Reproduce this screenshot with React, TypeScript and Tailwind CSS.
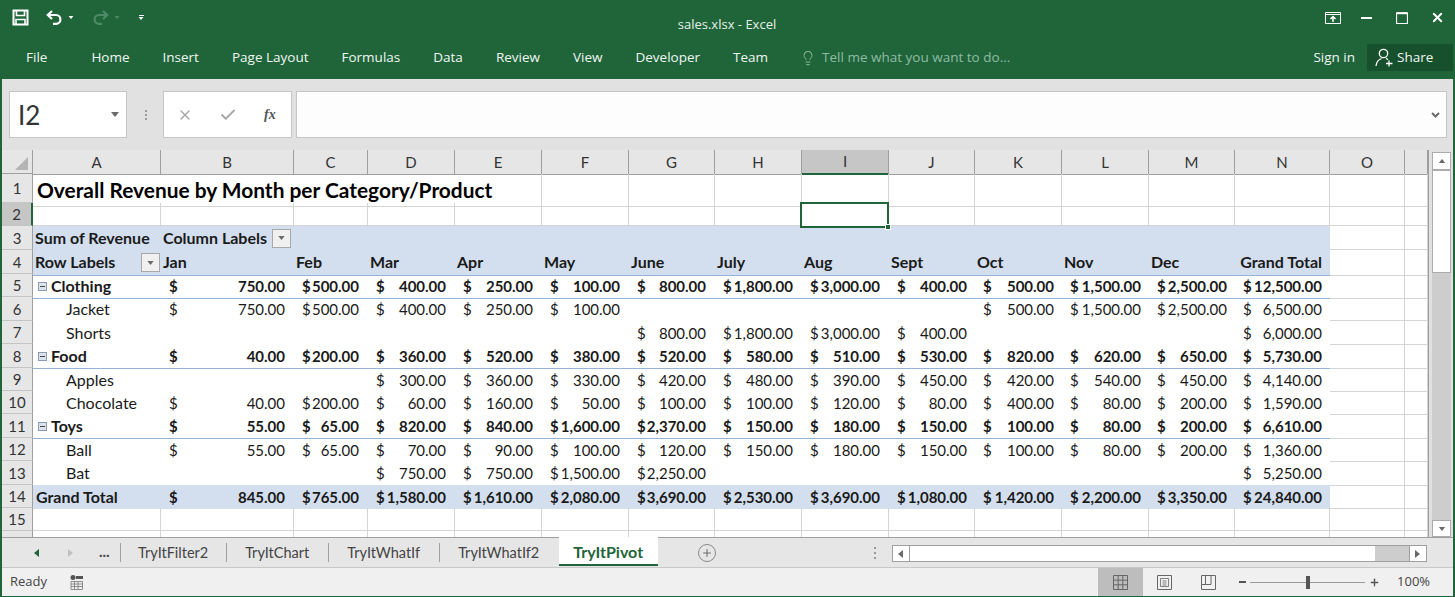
import { Check, Lightbulb, Plus, X } from "lucide-react";

// ── Sheet data ──────────────────────────────────────────────────
const GRID_COLS =
  "grid grid-cols-[128px_133px_74px_87px_87px_87px_86px_87px_87px_86px_87px_87px_86px_95px_75px_23px]";
const PIVOT_COLS =
  "grid grid-cols-[128px_133px_74px_87px_87px_87px_86px_87px_87px_86px_87px_87px_86px_95px]";

const COLUMNS = ["A", "B", "C", "D", "E", "F", "G", "H", "I", "J", "K", "L", "M", "N", "O", ""];
const MONTHS = ["Jan", "Feb", "Mar", "Apr", "May", "June", "July", "Aug", "Sept", "Oct", "Nov", "Dec"];

type Row = {
  n: number;
  h: string;
  label: string;
  kind: "group" | "item" | "total";
  values: string[];
};

const ROWS: Row[] = [
  { n: 5, h: "h-[23px]", label: "Clothing", kind: "group", values: ["750.00", "500.00", "400.00", "250.00", "100.00", "800.00", "1,800.00", "3,000.00", "400.00", "500.00", "1,500.00", "2,500.00", "12,500.00"] },
  { n: 6, h: "h-[24px]", label: "Jacket", kind: "item", values: ["750.00", "500.00", "400.00", "250.00", "100.00", "", "", "", "", "500.00", "1,500.00", "2,500.00", "6,500.00"] },
  { n: 7, h: "h-[23px]", label: "Shorts", kind: "item", values: ["", "", "", "", "", "800.00", "1,800.00", "3,000.00", "400.00", "", "", "", "6,000.00"] },
  { n: 8, h: "h-[24px]", label: "Food", kind: "group", values: ["40.00", "200.00", "360.00", "520.00", "380.00", "520.00", "580.00", "510.00", "530.00", "820.00", "620.00", "650.00", "5,730.00"] },
  { n: 9, h: "h-[23px]", label: "Apples", kind: "item", values: ["", "", "300.00", "360.00", "330.00", "420.00", "480.00", "390.00", "450.00", "420.00", "540.00", "450.00", "4,140.00"] },
  { n: 10, h: "h-[23px]", label: "Chocolate", kind: "item", values: ["40.00", "200.00", "60.00", "160.00", "50.00", "100.00", "100.00", "120.00", "80.00", "400.00", "80.00", "200.00", "1,590.00"] },
  { n: 11, h: "h-[24px]", label: "Toys", kind: "group", values: ["55.00", "65.00", "820.00", "840.00", "1,600.00", "2,370.00", "150.00", "180.00", "150.00", "100.00", "80.00", "200.00", "6,610.00"] },
  { n: 12, h: "h-[23px]", label: "Ball", kind: "item", values: ["55.00", "65.00", "70.00", "90.00", "100.00", "120.00", "150.00", "180.00", "150.00", "100.00", "80.00", "200.00", "1,360.00"] },
  { n: 13, h: "h-[24px]", label: "Bat", kind: "item", values: ["", "", "750.00", "750.00", "1,500.00", "2,250.00", "", "", "", "", "", "", "5,250.00"] },
  { n: 14, h: "h-[23px]", label: "Grand Total", kind: "total", values: ["845.00", "765.00", "1,580.00", "1,610.00", "2,080.00", "3,690.00", "2,530.00", "3,690.00", "1,080.00", "1,420.00", "2,200.00", "3,350.00", "24,840.00"] },
];

const LATO = "font-['Lato','Liberation_Sans',sans-serif]";
const CELL_FONT = `${LATO} text-[15px] text-[#1a1a1a]`;
const LABEL_FONT = `${LATO} text-[16px] text-[#1a1a1a]`;
const UI_FONT = "font-['Open_Sans','Liberation_Sans',sans-serif]";

// ── Small drawings ──────────────────────────────────────────────
function Caret({ className }: { className: string }) {
  return (
    <svg width="8" height="5" viewBox="0 0 8 5" className={className} fill="currentColor">
      <path d="M0 0h8L4 5z" />
    </svg>
  );
}

function SaveIcon() {
  return (
    <svg width="17" height="17" viewBox="0 0 17 17" fill="none" stroke="#fff" strokeWidth="2">
      <path d="M1.500 1.500h14v14h-14z" />
      <path d="M4.500 1.500v5h8v-5M4 15.500v-5h9v5" strokeWidth="1.600" />
    </svg>
  );
}

function UndoIcon({ color }: { color: string }) {
  return (
    <svg width="17" height="15" viewBox="0 0 17 15" fill="none" stroke={color} strokeWidth="2.200">
      <path d="M6 1 1.800 5 6 9" />
      <path d="M2 5h8a4.400 4.400 0 0 1 0 8.800H7" />
    </svg>
  );
}

function RedoIcon({ color }: { color: string }) {
  return (
    <svg width="17" height="15" viewBox="0 0 17 15" fill="none" stroke={color} strokeWidth="2.200">
      <path d="M11 1l4.200 4L11 9" />
      <path d="M15 5H7a4.400 4.400 0 0 0 0 8.800h3" />
    </svg>
  );
}

function WindowControls() {
  return (
    <div className="flex items-center text-white">
      <svg width="16" height="12" viewBox="0 0 16 12" fill="none" stroke="#fff" className="mr-[20px]">
        <path d="M.5.500h15v11H.500z" />
        <path d="M.5 2.500h15" />
        <path d="M8 10V5M5.500 7 8 4.500 10.500 7" strokeWidth="1.500" />
      </svg>
      <div className="mr-[24px] h-[2px] w-[11px] bg-white" />
      <svg width="12" height="12" viewBox="0 0 12 12" fill="none" stroke="#fff" className="mr-[22px]">
        <path d="M.5 1h11v10.500H.500z" strokeWidth="1.200" />
        <path d="M.5 1.200h11" strokeWidth="2" />
      </svg>
      <X size={15} strokeWidth={3} />
    </div>
  );
}

function ShareIcon() {
  return (
    <svg width="19" height="19" viewBox="0 0 19 19" fill="none" stroke="#fff" strokeWidth="1.300">
      <circle cx="8.500" cy="5.500" r="4.200" />
      <path d="M1 18c.4-4 2.500-6.500 5.500-7.500M11 10.500c.8.300 1.500.7 2 1.200" />
      <path d="M14 12.500v6M11 15.500h6.500" />
    </svg>
  );
}

function FilterButton({ className }: { className: string }) {
  return (
    <div className={`flex h-[19px] w-[19px] shrink-0 items-center justify-center border border-[#a8a8a8] bg-[#f0f0f0] text-[#6a6a6a] ${className}`}>
      <Caret className="h-[4px] w-[7px]" />
    </div>
  );
}

function CollapseBox() {
  return (
    <div className="mr-[4px] flex h-[9px] w-[9px] items-center justify-center border border-[#8c9bb0] bg-[#dde3ec]">
      <div className="h-[1px] w-[5px] bg-[#444]" />
    </div>
  );
}

// ── Title bar and ribbon tabs ───────────────────────────────────
function TitleBar() {
  return (
    <div className={`h-[79px] shrink-0 bg-[#1f6539] ${UI_FONT}`}>
      <div className="flex h-[40px] items-center pl-[10px] pr-[7px] pt-[1px]">
        <div className="flex -translate-y-[3px] items-center">
          <SaveIcon />
          <div className="ml-[17px]"><UndoIcon color="#ffffff" /></div>
          <Caret className="ml-[5px] h-[3px] w-[6px] text-white" />
          <div className="ml-[18px]"><RedoIcon color="#4f8a68" /></div>
          <Caret className="ml-[5px] h-[3px] w-[6px] text-[#4f8a68]" />
          <div className="ml-[18px] flex flex-col items-center gap-[1px]">
            <div className="h-[1px] w-[5px] bg-white" />
            <Caret className="h-[3px] w-[6px] text-white" />
          </div>
        </div>
        <div className="ml-[463px] w-[240px] translate-y-[4px] text-center text-[13px] text-[#e6efe9]">sales.xlsx - Excel</div>
        <div className="ml-auto -translate-y-[3px] pr-[1px]">
          <WindowControls />
        </div>
      </div>
      <div className="flex h-[39px] -translate-y-[2px] items-center text-[13.500px] text-[#f1f6f3]">
        <span className="ml-[24px] mr-[44px]">File</span>
        <div className="flex items-center gap-[33px]">
          {["Home", "Insert", "Page Layout", "Formulas", "Data", "Review", "View", "Developer", "Team"].map((t) => (
            <span key={t}>{t}</span>
          ))}
        </div>
        <Lightbulb size={16} strokeWidth={1.500} className="ml-[32px] text-[#8fbba3]" />
        <span className="ml-[6px] text-[#8fbba3]">Tell me what you want to do...</span>
        <span className="ml-auto mr-[12px]">Sign in</span>
        <div className="flex h-[27px] w-[86px] items-center gap-[3px] bg-[#17502c] pl-[8px]">
          <ShareIcon />
          <span>Share</span>
        </div>
      </div>
    </div>
  );
}

// ── Name box and formula bar ────────────────────────────────────
function FormulaBar() {
  return (
    <div className="flex h-[71px] shrink-0 items-start bg-[#e1e1e1] pl-[7px] pr-[6px] pt-[12px]">
      <div className="flex h-[47px] w-[118px] items-center border border-[#c6c6c6] bg-white pl-[8px] pr-[7px]">
        <span className={`text-[26px] leading-none text-[#333] ${LATO}`}>I2</span>
        <Caret className="ml-auto text-[#6a6a6a]" />
      </div>
      <div className="ml-[18px] flex h-[47px] flex-col justify-center gap-[2px] pt-[1px]">
        <div className="h-[2px] w-[2px] bg-[#9a9a9a]" />
        <div className="h-[2px] w-[2px] bg-[#9a9a9a]" />
        <div className="h-[2px] w-[2px] bg-[#9a9a9a]" />
      </div>
      <div className="ml-[16px] flex h-[47px] w-[129px] items-center border border-[#c6c6c6] bg-white pl-[13px]">
        <X size={16} strokeWidth={2} className="text-[#a8a8a8]" />
        <Check size={18} strokeWidth={2.500} className="ml-[26px] text-[#a8a8a8]" />
        <span className="ml-[27px] font-['Liberation_Serif',serif] text-[14px] font-bold italic text-[#555]">fx</span>
      </div>
      <div className="ml-[4px] flex h-[47px] flex-1 items-center justify-end border border-[#c6c6c6] bg-[#fdfdfd] pr-[6px]">
        <svg width="9" height="6" viewBox="0 0 9 6" fill="none" stroke="#6a6a6a" strokeWidth="2">
          <path d="M1 1l3.500 3.500L8 1" />
        </svg>
      </div>
    </div>
  );
}

// ── Cells ───────────────────────────────────────────────────────
function Money({ value, bold, late }: { value: string; bold: boolean; late: boolean }) {
  if (!value) return <div />;
  return (
    <div className={`flex items-center justify-between pl-[8px] ${late ? "pr-[8px]" : "pr-[9px]"} ${bold ? "font-bold" : ""} ${CELL_FONT}`}>
      <span>$</span>
      <span>{value}</span>
    </div>
  );
}

function RowHead({ n, active }: { n: number | string; active?: boolean }) {
  return (
    <div className={`flex w-[31px] shrink-0 items-center justify-center border-b border-r border-b-[#c4c4c4] pt-[1px] text-[15px] text-[#333] ${active ? "border-r-2 border-r-[#1f6539] bg-[#c6c6c6] text-[#1f6539]" : "border-r-[#9f9f9f] bg-[#e6e6e6]"} ${LATO}`}>
      {n}
    </div>
  );
}

const LINE = "border-b border-r border-[#d4d4d4]";

function BlankCells({ count }: { count: number }) {
  return (
    <>
      {Array.from({ length: count }).map((_, i) => (
        <div key={i} className={LINE} />
      ))}
    </>
  );
}

// ── Worksheet ───────────────────────────────────────────────────
function Sheet() {
  return (
    <div className="flex min-h-0 flex-1 flex-col">
      {/* column headers */}
      <div className="flex h-[24px] shrink-0 bg-[#e6e6e6]">
        <div className="relative w-[31px] shrink-0 border-b border-r border-[#9f9f9f]">
          <div className="absolute bottom-[3px] right-[4px] h-0 w-0 border-b-[13px] border-l-[13px] border-b-[#b4b4b4] border-l-transparent" />
        </div>
        <div className={`${GRID_COLS} flex-1`}>
          {COLUMNS.map((c, i) => (
            <div
              key={i}
              className={`flex items-center justify-center text-[15px] text-[#333] ${LATO} ${
                c === "I"
                  ? "border-b-2 border-r border-b-[#1f6539] border-r-[#9f9f9f] bg-[#c6c6c6] text-[#1f6539]"
                  : "border-b border-r border-[#9f9f9f]"
              }`}
            >
              {c}
            </div>
          ))}
        </div>
      </div>

      {/* row 1 */}
      <div className="flex h-[29px] shrink-0">
        <RowHead n={1} />
        <div className={`${GRID_COLS} flex-1`}>
          <div className={`col-span-5 flex items-center pb-[1px] pl-[4px] ${LATO} text-[20.900px] font-bold text-black ${LINE}`}>
            Overall Revenue by Month per Category/Product
          </div>
          <BlankCells count={11} />
        </div>
      </div>

      {/* row 2 */}
      <div className="flex h-[23px] shrink-0">
        <RowHead n={2} active />
        <div className={`${GRID_COLS} flex-1`}>
          {COLUMNS.map((c, i) =>
            c === "I" ? (
              <div key={i} className="relative z-10 -mb-[2px] -ml-[2px] -mt-[1px] border-2 border-[#1f6539] bg-white">
                <div className="absolute -bottom-[4px] -right-[4px] h-[6px] w-[6px] border border-white bg-[#1f6539]" />
              </div>
            ) : (
              <div key={i} className={LINE} />
            ),
          )}
        </div>
      </div>

      {/* row 3, pivot header */}
      <div className="flex h-[24px] shrink-0">
        <RowHead n={3} />
        <div className={`${GRID_COLS} flex-1`}>
          <div className="col-span-14 flex items-center bg-[#d3dfee]">
            <span className={`w-[128px] pl-[2px] font-bold ${LABEL_FONT}`}>Sum of Revenue</span>
            <span className={`pl-[2px] font-bold ${LABEL_FONT}`}>Column Labels</span>
            <FilterButton className="ml-[5px]" />
          </div>
          <BlankCells count={2} />
        </div>
      </div>

      {/* row 4, month captions */}
      <div className="flex h-[24px] shrink-0">
        <RowHead n={4} />
        <div className={`${GRID_COLS} flex-1`}>
          <div className={`col-span-14 ${PIVOT_COLS} border-b border-[#95b3d7] bg-[#d3dfee]`}>
            <div className={`flex items-center justify-between pl-[2px] pr-[1px] font-bold ${LABEL_FONT}`}>
              <span className="pb-[1px]">Row Labels</span>
              <FilterButton className="" />
            </div>
            {MONTHS.map((m) => (
              <div key={m} className={`flex items-center pb-[1px] pl-[2px] font-bold ${LABEL_FONT}`}>{m}</div>
            ))}
            <div className={`flex items-center justify-end pb-[1px] pr-[8px] font-bold ${LABEL_FONT}`}>Grand Total</div>
          </div>
          <BlankCells count={2} />
        </div>
      </div>

      {/* rows 5 to 14, pivot body */}
      {ROWS.map((row) => {
        const bold = row.kind !== "item";
        const edge =
          row.kind === "group" || row.n === 13
            ? "border-b border-[#95b3d7]"
            : row.kind === "total"
              ? "bg-[#d3dfee]"
              : "";
        return (
          <div key={row.n} className={`flex shrink-0 ${row.h}`}>
            <RowHead n={row.n} />
            <div className={`${GRID_COLS} flex-1`}>
              <div className={`col-span-14 ${PIVOT_COLS} ${edge}`}>
                <div
                  className={`flex items-center ${LABEL_FONT} ${bold ? "font-bold" : ""} ${
                    row.kind === "group" ? "pl-[5px]" : row.kind === "item" ? "pl-[33px]" : "pl-[3px]"
                  }`}
                >
                  {row.kind === "group" && <CollapseBox />}
                  {row.label}
                </div>
                {row.values.map((v, i) => (
                  <Money key={i} value={v} bold={bold} late={i >= 8} />
                ))}
              </div>
              <BlankCells count={2} />
            </div>
          </div>
        );
      })}

      {/* row 15 and the cut off row 16 */}
      <div className="flex h-[23px] shrink-0">
        <RowHead n={15} />
        <div className={`${GRID_COLS} flex-1`}>
          <BlankCells count={16} />
        </div>
      </div>
      <div className="flex h-[6px] shrink-0 overflow-hidden">
        <div className="w-[31px] shrink-0 border-r border-[#9f9f9f] bg-[#e6e6e6]" />
        <div className={`${GRID_COLS} flex-1`}>
          {COLUMNS.map((c, i) => (
            <div key={i} className="border-r border-[#d4d4d4]" />
          ))}
        </div>
      </div>
    </div>
  );
}

function VerticalScrollbar() {
  return (
    <div className="flex w-[25px] shrink-0 flex-col border-l border-[#9f9f9f] bg-[#e1e1e1] pl-[3px] pt-[2px]">
      <div className="flex h-[18px] w-[19px] items-center justify-center border border-[#ababab] bg-white text-[#6a6a6a]">
        <Caret className="h-[4px] w-[8px] rotate-180" />
      </div>
      <div className="flex w-[19px] flex-1 flex-col bg-[#cdcdcd]">
        <div className="h-[103px] border border-[#ababab] bg-white" />
        <div className="flex-1" />
      </div>
      <div className="flex h-[17px] w-[19px] items-center justify-center border border-[#ababab] bg-white text-[#6a6a6a]">
        <Caret className="h-[4px] w-[8px]" />
      </div>
    </div>
  );
}

// ── Sheet tabs and horizontal scrollbar ─────────────────────────
function Triangle({ dir, color }: { dir: "left" | "right"; color: string }) {
  return (
    <svg width="5" height="8" viewBox="0 0 5 8" fill={color}>
      <path d={dir === "left" ? "M5 0v8L0 4z" : "M0 0v8l5-4z"} />
    </svg>
  );
}

function TabsBar() {
  const tabs = ["TryItFilter2", "TryItChart", "TryItWhatIf", "TryItWhatIf2"];
  return (
    <div className={`flex h-[30px] shrink-0 items-start border-t border-[#9f9f9f] bg-[#e6e6e6] ${LATO}`}>
      <div className="ml-[32px] mt-[11px]"><Triangle dir="left" color="#1f6539" /></div>
      <div className="ml-[29px] mt-[11px]"><Triangle dir="right" color="#c0c0c0" /></div>
      <span className="ml-[26px] mt-[2px] text-[15px] font-bold text-[#444]">...</span>
      <div className="ml-[10px] mt-[4px] flex h-[20px] items-center pt-[1px] text-[14.500px] text-[#444]">
        <div className="h-full w-px bg-[#a0a0a0]" />
        <span className="w-[105px] text-center">{tabs[0]}</span>
        <div className="h-full w-px bg-[#a0a0a0]" />
        <span className="w-[101px] text-center">{tabs[1]}</span>
        <div className="h-full w-px bg-[#a0a0a0]" />
        <span className="w-[110px] text-center">{tabs[2]}</span>
        <div className="h-full w-px bg-[#a0a0a0]" />
        <span className="w-[118px] text-center">{tabs[3]}</span>
      </div>
      <div className="-mt-[1px] ml-[1px] flex h-[29px] w-[99px] items-center justify-center border-b-2 border-b-[#1f6539] bg-white pt-[2px] text-[16px] font-bold text-[#1f6539]">
        TryItPivot
      </div>
      <div className="ml-[40px] mt-[6px] flex h-[18px] w-[18px] items-center justify-center rounded-full border border-[#8a8a8a] text-[#6a6a6a]">
        <Plus size={12} strokeWidth={2} />
      </div>
      <div className="ml-[158px] mt-[9px] flex flex-col gap-[3px]">
        <div className="h-[2px] w-[2px] bg-[#9a9a9a]" />
        <div className="h-[2px] w-[2px] bg-[#9a9a9a]" />
        <div className="h-[2px] w-[2px] bg-[#9a9a9a]" />
      </div>
      <div className="ml-[16px] mt-[7px] flex h-[17px] w-[535px] border border-[#9f9f9f] bg-[#cdcdcd]">
        <div className="flex w-[17px] items-center justify-center border-r border-[#9f9f9f] bg-white">
          <Triangle dir="left" color="#6a6a6a" />
        </div>
        <div className="w-[465px] bg-white" />
        <div className="flex-1" />
        <div className="flex w-[17px] items-center justify-center border-l border-[#9f9f9f] bg-white">
          <Triangle dir="right" color="#6a6a6a" />
        </div>
      </div>
    </div>
  );
}

// ── Status bar ──────────────────────────────────────────────────
function StatusBar() {
  return (
    <div className={`flex h-[29px] shrink-0 items-center border-t border-[#c8c8c8] bg-[#f0f0f0] text-[13px] text-[#444] ${UI_FONT}`}>
      <span className="ml-[8px] text-[13px]">Ready</span>
      <svg width="13" height="15" viewBox="0 0 13 15" fill="none" className="ml-[23px]">
        <circle cx="3" cy="2.500" r="2.500" fill="#555" />
        <path d="M6 1h7v3H6z" fill="#555" />
        <path d="M1 6.500h11.500v8H1zM1 9h11.500M1 11.500h11.500M4.500 6.500v8M8 6.500v8" stroke="#777" strokeWidth=".8" />
      </svg>
      <div className="ml-[1015px] flex h-full w-[45px] items-center justify-center bg-[#bdbdbd]">
        <svg width="15" height="15" viewBox="0 0 15 15" fill="none" stroke="#666">
          <path d="M.5.500h14v14H.500zM.5 5.200h14M.5 9.800h14M5.200.500v14M9.800.500v14" />
        </svg>
      </div>
      <svg width="15" height="15" viewBox="0 0 15 15" fill="none" stroke="#666" className="ml-[14px]">
        <path d="M.5.500h14v14H.500z" />
        <path d="M3.500 3.500h8v8h-8zM5.500 6h4M5.500 8h4M5.500 10h4" strokeWidth=".8" />
      </svg>
      <svg width="15" height="15" viewBox="0 0 15 15" fill="none" stroke="#666" className="ml-[29px]">
        <path d="M.5.500h14v14H.500zM.5 9.500h9.500V.500M4.500.500v9" />
      </svg>
      <div className="ml-[23px] h-[2px] w-[7px] bg-[#555]" />
      <div className="relative ml-[4px] h-px w-[115px] bg-[#9a9a9a]">
        <div className="absolute -top-[6px] left-[56px] h-[13px] w-[4px] bg-[#555]" />
      </div>
      <Plus size={11} strokeWidth={3} className="ml-[4px] text-[#555]" />
      <span className="ml-[17px] text-[13px]">100%</span>
    </div>
  );
}

// ── Page ────────────────────────────────────────────────────────
export default function App() {
  return (
    <div className="flex h-[597px] w-[1455px] flex-col overflow-hidden border-x-2 border-b border-[#1f6539] bg-white">
      <TitleBar />
      <FormulaBar />
      <div className="flex h-[387px] shrink-0">
        <Sheet />
        <VerticalScrollbar />
      </div>
      <TabsBar />
      <StatusBar />
    </div>
  );
}
